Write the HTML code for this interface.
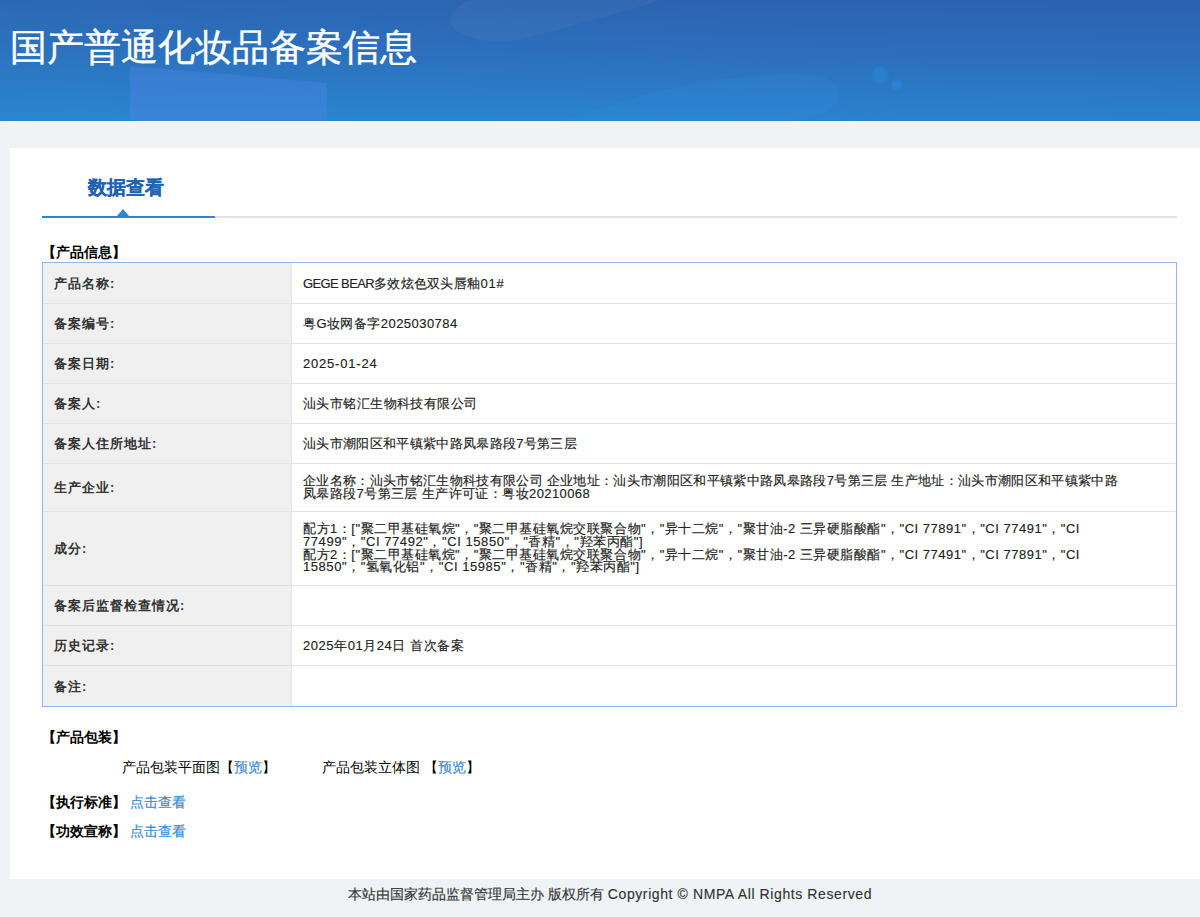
<!DOCTYPE html>
<html><head><meta charset="utf-8">
<style>
*{margin:0;padding:0;box-sizing:border-box}
html,body{width:1200px;height:917px;overflow:hidden}
body{background:#eff3f6;font-family:"Liberation Sans",sans-serif;color:#333;position:relative}
.hdr{position:absolute;left:0;top:0;width:1200px;height:121px;overflow:hidden;
 background:linear-gradient(90deg,rgba(40,150,215,0.10) 0%,rgba(40,150,215,0) 45%,rgba(30,70,170,0.06) 100%),linear-gradient(180deg,#2c63b0 0%,#2c6fbd 45%,#2a84cf 100%)}
.hdr .t{position:absolute;left:10px;top:24px;font-size:37px;color:#fff;-webkit-text-stroke:0.4px #fff;white-space:nowrap;line-height:48px;z-index:5}
.hdr .d{position:absolute}
.card{position:absolute;left:10px;top:148px;width:1190px;height:731px;background:#fff}
.tab{position:absolute;left:78px;top:26px;font-size:19px;font-weight:bold;color:#2063b3;-webkit-text-stroke:0.2px #2063b3;line-height:28px}
.tl1{position:absolute;left:32px;top:68px;width:173px;height:2px;background:#2a86d6}
.tl2{position:absolute;left:205px;top:68px;width:962px;height:2px;background:#e4e4e4}
.tri{position:absolute;left:107px;top:61px;width:0;height:0;border-left:6.5px solid transparent;border-right:6.5px solid transparent;border-bottom:7px solid #2a86d6}
.sec{position:absolute;font-size:14px;font-weight:bold;color:#000;line-height:16px;white-space:nowrap}
.tbl{position:absolute;left:42px;top:262px;width:1135px;height:445px;border:1px solid #92b6e8;background:#fff}
.r{position:absolute;left:0;width:1133px;display:flex;border-top:1px solid #e3e3e3}
.r.f{border-top:none}
.l{letter-spacing:1px;width:249px;flex:none;background:#f0f0f0;font-weight:bold;padding-left:11px;border-right:1px solid #e3e3e3;display:flex;align-items:center;font-size:13px;line-height:13px;white-space:nowrap}
.v{color:#222;-webkit-text-stroke:0.15px #222;flex:1;padding-left:11px;display:flex;flex-direction:column;justify-content:center;font-size:13px;line-height:13px;white-space:nowrap}
.v div{line-height:12.7px}
.lnk{color:#3689d6;-webkit-text-stroke:0.15px #3689d6}
.ft{position:absolute;left:348px;top:886px;white-space:nowrap;font-size:14px;line-height:16px;color:#333;-webkit-text-stroke:0.15px #333}
</style></head><body>
<div class="hdr">
 <svg class="d" style="left:0;top:0" width="1200" height="121" viewBox="0 0 1200 121">
  <path d="M130 66 L327 83 L327 121 L130 121 Z" fill="#4f86e4" fill-opacity="0.38"/>
  <path d="M470 0 L660 0 L630 10 L520 40 Q480 46 455 30 Q440 14 470 0 Z" fill="#ffffff" fill-opacity="0.035"/>
  <path d="M560 121 L640 96 Q740 70 815 75 Q845 82 838 100 Q830 116 790 121 Z" fill="#3a9ae6" fill-opacity="0.13"/>
  <defs><filter id="bl" x="-50%" y="-50%" width="200%" height="200%"><feGaussianBlur stdDeviation="1.2"/></filter></defs><circle cx="880" cy="75" r="8" fill="#2a90e4" fill-opacity="0.4" filter="url(#bl)"/>
  <circle cx="897" cy="85" r="5.5" fill="#2a90e4" fill-opacity="0.45" filter="url(#bl)"/>
 </svg>
 <div class="t">国产普通化妆品备案信息</div></div>
<div class="card">
 <div class="tab">数据查看</div>
 <div class="tl1"></div><div class="tl2"></div><div class="tri"></div>
 <div class="sec" style="left:32px;top:96px">【产品信息】</div>
</div>
<div class="tbl">
  <div class="r f" style="top:0;height:40px"><div class="l">产品名称:</div><div class="v"><span id="v1"><span style="letter-spacing:-0.62px">GEGE BEAR</span><span style="letter-spacing:0.3px">多效炫色双头唇釉</span><span style="letter-spacing:0.8px">01#</span></span></div></div>
  <div class="r" style="top:40px;height:40px"><div class="l">备案编号:</div><div class="v"><span id="v2" style="letter-spacing:0.45px">粤G妆网备字2025030784</span></div></div>
  <div class="r" style="top:80px;height:40px"><div class="l">备案日期:</div><div class="v"><span id="v3" style="letter-spacing:0.8px">2025-01-24</span></div></div>
  <div class="r" style="top:120px;height:40px"><div class="l">备案人:</div><div class="v"><span id="v4" style="letter-spacing:0.417px">汕头市铭汇生物科技有限公司</span></div></div>
  <div class="r" style="top:160px;height:40px"><div class="l">备案人住所地址:</div><div class="v"><span id="v5" style="letter-spacing:0.325px">汕头市潮阳区和平镇紫中路凤皋路段7号第三层</span></div></div>
  <div class="r" style="top:200px;height:48px"><div class="l">生产企业:</div><div class="v"><div><span id="v6a" style="letter-spacing:0.327px">企业名称：汕头市铭汇生物科技有限公司 企业地址：汕头市潮阳区和平镇紫中路凤皋路段7号第三层 生产地址：汕头市潮阳区和平镇紫中路</span></div><div><span id="v6b" style="letter-spacing:0.4px">凤皋路段7号第三层 生产许可证：粤妆20210068</span></div></div></div>
  <div class="r" style="top:248px;height:74px"><div class="l">成分:</div><div class="v"><div><span id="v7a" style="letter-spacing:0.512px">配方1：["聚二甲基硅氧烷"，"聚二甲基硅氧烷交联聚合物"，"异十二烷"，"聚甘油-2 三异硬脂酸酯"，"CI 77891"，"CI 77491"，"CI</span></div><div><span id="v7b" style="letter-spacing:0.57px">77499"，"CI 77492"，"CI 15850"，"香精"，"羟苯丙酯"]</span></div><div><span id="v7c" style="letter-spacing:0.512px">配方2：["聚二甲基硅氧烷"，"聚二甲基硅氧烷交联聚合物"，"异十二烷"，"聚甘油-2 三异硬脂酸酯"，"CI 77491"，"CI 77891"，"CI</span></div><div><span id="v7d" style="letter-spacing:0.556px">15850"，"氢氧化铝"，"CI 15985"，"香精"，"羟苯丙酯"]</span></div></div></div>
  <div class="r" style="top:322px;height:40px"><div class="l">备案后监督检查情况:</div><div class="v"></div></div>
  <div class="r" style="top:362px;height:40px"><div class="l">历史记录:</div><div class="v"><span id="v9" style="letter-spacing:0.55px">2025年01月24日 首次备案</span></div></div>
  <div class="r" style="top:402px;height:41px"><div class="l">备注:</div><div class="v"></div></div>
</div>
<div class="card2" style="position:absolute;left:10px;top:148px">
 <div class="sec" style="left:32px;top:581px">【产品包装】</div>
 <div class="sec" style="left:112px;top:611px;font-weight:normal">产品包装平面图【<span class="lnk">预览</span>】</div>
 <div class="sec" style="left:312px;top:611px;font-weight:normal">产品包装立体图 【<span class="lnk">预览</span>】</div>
 <div class="sec" style="left:32px;top:646px">【执行标准】 <span class="lnk" style="font-weight:normal">点击查看</span></div>
 <div class="sec" style="left:32px;top:675px">【功效宣称】 <span class="lnk" style="font-weight:normal">点击查看</span></div>
</div>
<div class="ft"><span id="ftc">本站由国家药品监督管理局主办 版权所有 </span><span id="ftl" style="letter-spacing:0.6px">Copyright © NMPA All Rights Reserved</span></div>
</body></html>
